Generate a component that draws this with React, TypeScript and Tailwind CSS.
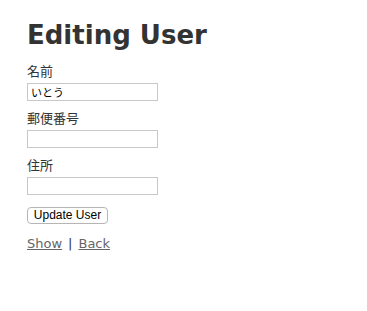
export default function App() {
  const font = { fontFamily: '"DejaVu Sans", Verdana, "Noto Sans CJK JP", sans-serif' };
  return (
    <div className="min-h-[311px] bg-white px-[27px] pt-[19px] text-[13px] leading-[18px] text-[#333]" style={font}>
      <h1 className="text-[26px] leading-[33px] font-bold mb-[11px]">Editing User</h1>

      <form className="flex flex-col">
        <div className="flex flex-col mb-[9px]">
          <label className="h-[18px]">名前</label>
          <input
            defaultValue="いとう"
            className="mt-[2px] w-[131px] h-[18px] border border-[#c8c8c8] px-[3px] text-[11px] text-black outline-none font-['Noto_Sans_CJK_JP',sans-serif]"
          />
        </div>
        <div className="flex flex-col mb-[9px]">
          <label className="h-[18px]">郵便番号</label>
          <input className="mt-[2px] w-[131px] h-[18px] border border-[#c8c8c8] px-[3px] text-[11px] outline-none" />
        </div>
        <div className="flex flex-col mb-[11px]">
          <label className="h-[18px]">住所</label>
          <input className="mt-[2px] w-[131px] h-[18px] border border-[#c8c8c8] px-[3px] text-[11px] outline-none" />
        </div>
        <div>
          <button
            type="button"
            className="h-[17px] w-[81px] rounded-[4px] border border-[#b5b5b5] bg-white text-[12px] leading-[15px] text-black font-['Liberation_Sans',Arial,sans-serif]"
          >
            Update User
          </button>
        </div>
      </form>

      <div className="mt-[11px] flex items-center">
        <a href="#" className="text-[#666] underline">Show</a>
        <span className="mx-[6px]">|</span>
        <a href="#" className="text-[#666] underline">Back</a>
      </div>
    </div>
  );
}
